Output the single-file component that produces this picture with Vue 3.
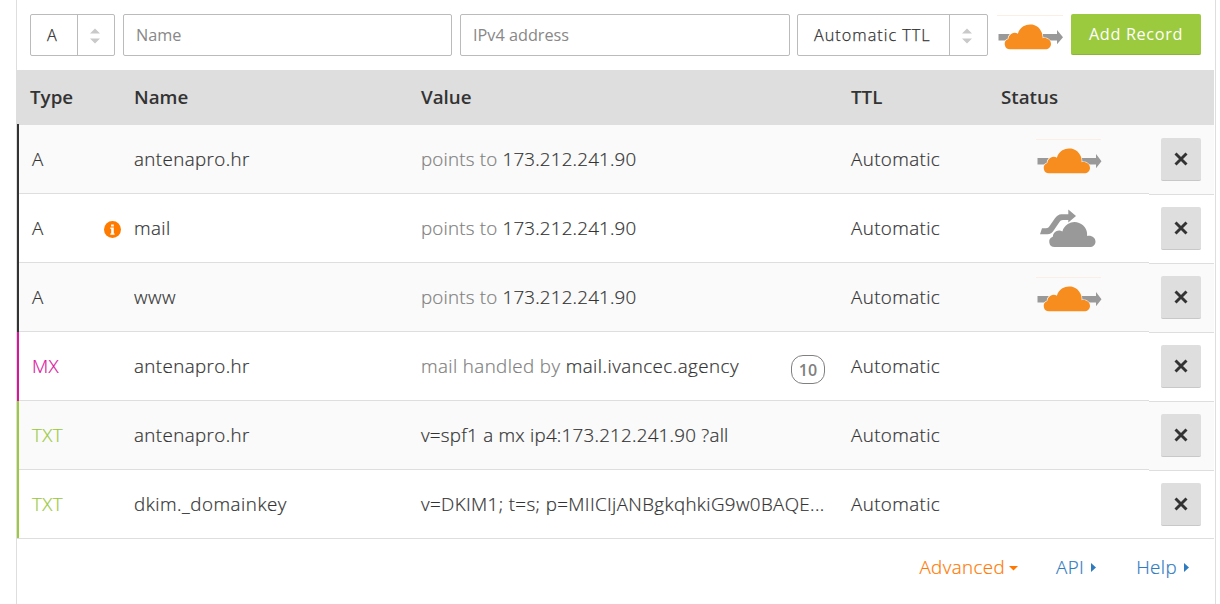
<script setup>
const columns = ['Type', 'Name', 'Value', 'TTL', 'Status', '']

const records = [
  { type: 'A', name: 'antenapro.hr', prefix: 'points to', value: '173.212.241.90', proxy: 'on' },
  { type: 'A', name: 'mail', prefix: 'points to', value: '173.212.241.90', proxy: 'off', info: true },
  { type: 'A', name: 'www', prefix: 'points to', value: '173.212.241.90', proxy: 'on' },
  { type: 'MX', name: 'antenapro.hr', prefix: 'mail handled by', value: 'mail.ivancec.agency', priority: 10 },
  { type: 'TXT', name: 'antenapro.hr', value: 'v=spf1 a mx ip4:173.212.241.90 ?all' },
  { type: 'TXT', name: 'dkim._domainkey', value: 'v=DKIM1; t=s; p=MIICIjANBgkqhkiG9w0BAQE...' },
]

const cloud =
  'M13.2 34.300a5.300 5.300 0 0 1-1.900-10.300A6.400 6.400 0 0 1 20.900 18.700A12.600 12.600 0 0 1 45.600 23.200C50.500 22.400 54 25.200 54 29C54 32 51.500 34.300 48.300 34.300Z'
</script>

<template>
  <main class="panel">
    <form class="toolbar" @submit.prevent>
      <div class="select type-select">
        <span class="select-text">A</span>
        <span class="select-toggle"><svg width="10" height="16" viewBox="0 0 10 16"><path d="M0 5.500L5 .5l5 5zM0 10.500h10L5 15.500z" fill="#c9c9c9" /></svg></span>
      </div>
      <input class="input name-input" placeholder="Name" />
      <input class="input address-input" placeholder="IPv4 address" />
      <div class="select ttl-select">
        <span class="select-text">Automatic TTL</span>
        <span class="select-toggle"><svg width="10" height="16" viewBox="0 0 10 16"><path d="M0 5.500L5 .5l5 5zM0 10.500h10L5 15.500z" fill="#c9c9c9" /></svg></span>
      </div>
      <svg class="toolbar-cloud" width="66" height="40" viewBox="0 0 66 40">
        <path d="M0 .5h66" stroke="#fdeee4" />
        <path d="M1.500 19H60v-4l6 7.300-6 7V25.500H1.500z" fill="#999" />
        <path :d="cloud" fill="#f78d1f" stroke="#fff" stroke-width="1.200" paint-order="stroke" />
      </svg>
      <button class="add">Add Record</button>
    </form>

    <section class="table">
      <div class="row head">
        <div v-for="column in columns" :key="column" class="head-cell">{{ column }}</div>
      </div>
      <div v-for="record in records" :key="record.type + record.name" class="row record" :class="record.type.toLowerCase()">
        <div class="cell type">
          <span>{{ record.type }}</span>
          <svg v-if="record.info" class="info" width="17" height="17" viewBox="0 0 17 17">
            <circle cx="8.500" cy="8.500" r="8.500" fill="#ff7b00" />
            <path d="M7.100 3.400h2.700v2.100H7.100zM6.400 6.600h3.400v5.800h.8v1.300H6.300v-1.300h.9V7.900h-.8z" fill="#fff" />
          </svg>
        </div>
        <div class="cell name">{{ record.name }}</div>
        <div class="cell value">
          <span><span v-if="record.prefix" class="muted">{{ record.prefix }}&nbsp;</span><span class="content">{{ record.value }}</span></span>
          <span v-if="record.priority" class="priority">{{ record.priority }}</span>
        </div>
        <div class="cell">Automatic</div>
        <div class="cell status">
          <svg v-if="record.proxy === 'on'" width="66" height="42" viewBox="0 0 66 42">
            <path d="M0 .5h65" stroke="#fbeee7" />
            <path d="M1.500 19H60v-4l5.500 7.300-5.500 7V25.500H1.500z" fill="#999" />
            <path :d="cloud" fill="#f78d1f" stroke="#fafafa" stroke-width="1.200" paint-order="stroke" />
          </svg>
          <svg v-else-if="record.proxy === 'off'" width="66" height="42" viewBox="0 0 66 42">
            <path d="M4 26.300L6 20.300h4c1.600 0 2.600-.8 3.600-2.200l5.200-7.600c1.900-2.700 3.900-4.300 6.700-4.300h6.800V1.500l7.700 6.500-7.700 6.500v-2.500h-5.300c-1.700 0-2.700.7-3.700 2.200l-5.300 7.900c-1.900 2.900-3.700 4.200-6.700 4.200z" fill="#999" />
            <path :d="cloud" transform="translate(5.500 4.700)" fill="#999" stroke="#fff" stroke-width="1.200" paint-order="stroke" />
          </svg>
        </div>
        <div class="cell remove-cell">
          <button class="remove" aria-label="Delete">
            <svg width="14" height="14" viewBox="0 0 14 14"><path d="M1.500 1.500l11 11M12.500 1.500l-11 11" stroke="#333" stroke-width="2.900" /></svg>
          </button>
        </div>
      </div>
    </section>

    <footer class="links">
      <a class="advanced">Advanced<svg width="9" height="5" viewBox="0 0 9 5"><path d="M0 0h9L4.500 4.500z" fill="currentColor" /></svg></a>
      <a class="api">API<svg width="5" height="9" viewBox="0 0 5 9"><path d="M0 0v9l5-4.500z" fill="currentColor" /></svg></a>
      <a class="help">Help<svg width="5" height="9" viewBox="0 0 5 9"><path d="M0 0v9l5-4.500z" fill="currentColor" /></svg></a>
    </footer>
  </main>
</template>

<style>
body {
  background: #fff;
  overflow: hidden;
}
</style>

<style scoped>
* {
  box-sizing: border-box;
}
.panel {
  width: 1200px;
  height: 604px;
  margin-left: 16px;
  border: solid #dedede;
  border-width: 0 1px;
  font: 300 18.75px/28px 'Open Sans', sans-serif;
  color: #333;
}
.toolbar {
  display: flex;
  height: 70px;
  padding: 14px 0 0 13px;
  font-size: 16.25px;
}
.select,
.input {
  height: 42px;
  border: 1px solid #bbb;
  border-radius: 2px;
  background: #fff;
}
.select {
  display: flex;
  line-height: 40px;
}
.select-text {
  flex: 1;
  padding-left: 16px;
  letter-spacing: 1px;
  -webkit-text-stroke: 0.25px;
}
.select-toggle {
  display: flex;
  align-items: center;
  justify-content: center;
  width: 38px;
  padding: 2px 4px 0 0;
  border-left: 1px solid #bbb;
}
.type-select {
  width: 85px;
  margin-right: 8px;
}
.type-select .select-toggle {
  width: 37px;
  padding-right: 2px;
}
.ttl-select {
  width: 191px;
}
.input {
  padding: 0 12px;
  font: 400 16.25px 'Open Sans', sans-serif;
  color: #333;
}
.input::placeholder {
  color: #888;
}
.name-input {
  width: 329px;
  margin-right: 8px;
}
.address-input {
  width: 330px;
  margin-right: 7px;
}
.toolbar-cloud {
  margin: 1px 8px 0 9px;
}
.add {
  width: 130px;
  height: 41px;
  padding: 0;
  border: 0;
  border-bottom: 1px solid #8bb536;
  border-radius: 2px;
  background: #9bca3e;
  color: #fff;
  font: 400 16.25px 'Open Sans', sans-serif;
  letter-spacing: 0.65px;
}
.row {
  display: grid;
  grid-template-columns: 104px 287px 430px 150px 161px 65px;
  width: 1197px;
}
.head {
  height: 55px;
  background: #dedede;
  font-weight: 600;
}
.head-cell {
  padding: 13px 0 0 13px;
}
.record {
  height: 69px;
  letter-spacing: 0.4px;
  -webkit-text-stroke: 0.2px;
}
.record:nth-child(even) .cell {
  background: #fafafa;
}
.cell {
  padding: 20px 13px 0;
  height: 69px;
  border-bottom: 1px solid #dedede;
  white-space: nowrap;
}
.type {
  position: relative;
  display: flex;
  justify-content: space-between;
  padding: 20px 0 0 15px;
}
.type::before {
  content: '';
  position: absolute;
  top: 0;
  bottom: -1px;
  left: 0;
  width: 2px;
  background: currentColor;
}
.record:nth-child(2) .type::before {
  top: -1px;
}
.record:last-child .type::before {
  bottom: 0;
}
.record:last-child .name {
  letter-spacing: 0.52px;
}
.info {
  margin-top: 7px;
}
.mx .type {
  color: #d9169b;
}
.txt .type {
  color: #9bca3e;
}
.value {
  display: flex;
  justify-content: space-between;
}
.a .value {
  letter-spacing: 0.2px;
}
.mx .content {
  letter-spacing: 0.47px;
}
.txt .value {
  letter-spacing: 0.25px;
}
.record:last-child .value {
  letter-spacing: 0.37px;
}
.muted {
  color: #808080;
}
.priority {
  width: 34px;
  height: 29px;
  margin-top: 3px;
  border: 1px solid #808080;
  border-radius: 12px;
  font-size: 16px;
  line-height: 28px;
  font-weight: 600;
  letter-spacing: 0;
  text-align: center;
  color: #808080;
  -webkit-text-stroke: 0;
}
.status {
  padding: 14px 0 0 48px;
}
.status svg {
  display: block;
}
.remove-cell {
  position: relative;
  padding: 13px 12px 0;
}
.record:not(:last-child) .remove-cell {
  border-bottom: 0;
}
.record:not(:last-child) .remove-cell::after {
  content: '';
  position: absolute;
  z-index: 1;
  right: 0;
  bottom: -1px;
  left: 0;
  height: 1px;
  background: #dedede;
}
.remove {
  display: flex;
  align-items: center;
  justify-content: center;
  width: 40px;
  height: 43px;
  padding: 0;
  border: 0;
  border-bottom: 1px solid #c8c8c8;
  border-radius: 2px;
  background: #dedede;
}
.links {
  display: flex;
  justify-content: flex-end;
  padding: 14px 26px 0 0;
  color: #2f7bbf;
  letter-spacing: 0.4px;
  -webkit-text-stroke: 0.2px;
}
.links a {
  display: flex;
  align-items: center;
}
.advanced {
  color: #ff7900;
}
.advanced svg {
  margin: 3px 38px 0 4px;
}
.api svg {
  margin: 1px 40px 0 7px;
}
.help svg {
  margin: 1px 0 0 7px;
}
</style>
